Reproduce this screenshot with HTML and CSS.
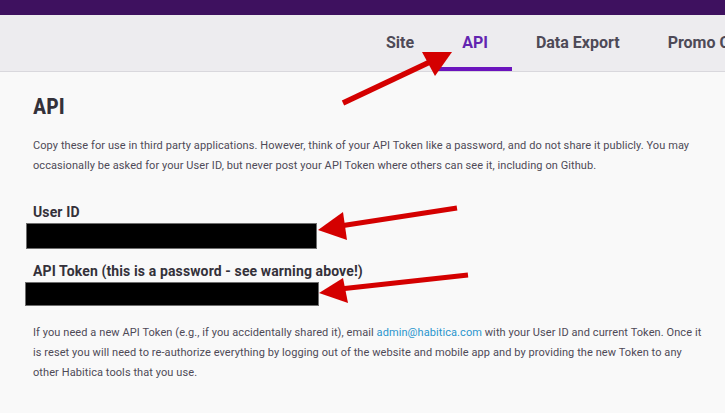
FILE: index.html
```html
<!DOCTYPE html>
<html lang="en">
<head>
<meta charset="utf-8">
<title>Settings - API</title>
<link rel="stylesheet" href="styles.css">
</head>
<body>
<div class="topbar"></div>
<nav class="tabs">
  <a class="tab">Site</a>
  <a class="tab active">API</a>
  <a class="tab">Data Export</a>
  <a class="tab">Promo Code</a>
</nav>
<main class="content">
  <h1 class="title">API</h1>
  <p class="text intro">Copy these for use in third party applications. However, think of your API Token like a password, and do not share it publicly. You may occasionally be asked for your User ID, but never post your API Token where others can see it, including on Github.</p>
  <div class="field">
    <h2 class="label">User ID</h2>
    <div class="redacted r1"></div>
  </div>
  <div class="field">
    <h2 class="label">API Token (this is a password - see warning above!)</h2>
    <div class="redacted r2"></div>
  </div>
  <p class="text outro">If you need a new API Token (e.g., if you accidentally shared it), email <a class="link">admin@habitica.com</a> with your User ID and current Token. Once it is reset you will need to re-authorize everything by logging out of the website and mobile app and by providing the new Token to any other Habitica tools that you use.</p>
</main>
<svg class="arrows" width="725" height="413" viewBox="0 0 725 413">
  <g fill="#d40000" stroke="#d40000">
    <line x1="343" y1="103" x2="432" y2="61" stroke-width="5.5"/>
    <polygon points="452,52 422,52 435,76" stroke="none"/>
    <line x1="457" y1="208" x2="340" y2="226" stroke-width="5"/>
    <polygon points="318,230 343,212 347,240" stroke="none"/>
    <line x1="468" y1="275" x2="340" y2="289" stroke-width="5"/>
    <polygon points="319,293 343,278 348,303" stroke="none"/>
  </g>
</svg>
</body>
</html>
```
FILE: styles.css
```css
* { box-sizing: border-box; }
html, body { margin: 0; padding: 0; }
body {
  width: 725px;
  height: 413px;
  overflow: hidden;
  background: #f9f9f9;
  font-family: "Roboto", "Liberation Sans", sans-serif;
  position: relative;
}
.topbar {
  height: 15px;
  background: #3e115f;
}
.tabs {
  display: flex;
  height: 57px;
  padding-left: 362px;
  background: #edecef;
  border-bottom: 1px solid #d9d8dd;
  white-space: nowrap;
  overflow: hidden;
}
.tab {
  display: flex;
  flex-shrink: 0;
  align-items: center;
  padding: 3px 24px 0;
  font-size: 16px;
  font-weight: 700;
  color: #4e4a57;
  border-bottom: 4px solid transparent;
}
.tab.active {
  color: #6325b0;
  border-bottom-color: #6b14bd;
}
.content {
  padding: 22px 0 0 33px;
}
.title {
  margin: 0;
  font-size: 22px;
  line-height: 26px;
  font-stretch: 80%;
  font-weight: 700;
  color: #34313a;
}
.text {
  margin: 0;
  padding-right: 20px;
  font-size: 11px;
  line-height: 20px;
  letter-spacing: 0.08px;
  color: #4e4a57;
}
.intro { margin-top: 16px; }
.field { margin-top: 27px; }
.field + .field { margin-top: 13px; }
.label {
  margin: 0 0 2px;
  font-size: 14px;
  line-height: 18px;
  letter-spacing: 0.12px;
  font-weight: 700;
  color: #34313a;
}
.redacted {
  margin-left: -7px;
  background: #000;
  border: 1px solid #6e6e6e;
}
.r1 { width: 291px; height: 26px; }
.r2 { width: 294px; height: 24px; margin-left: -8px; margin-top: 1px; }
.outro { margin-top: 17px; }
.link { color: #2995cd; text-decoration: none; }
.arrows {
  position: absolute;
  left: 0;
  top: 0;
  pointer-events: none;
}
```
